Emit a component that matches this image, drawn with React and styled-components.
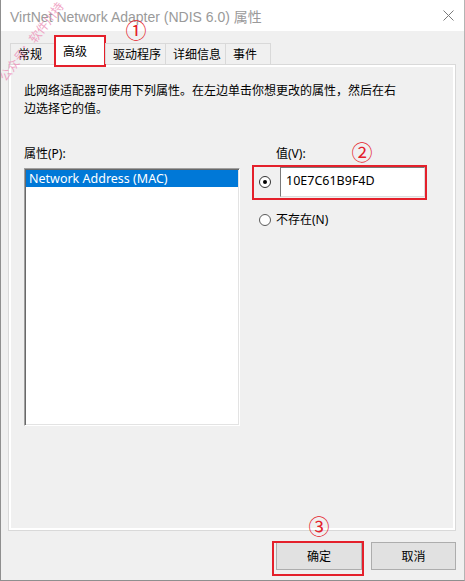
import React from "react";
import styled, { createGlobalStyle } from "styled-components";

const font = `"Noto Sans", "Noto Sans CJK SC", sans-serif`;

const Global = createGlobalStyle`
  body {
    margin: 0;
    background: #ffffff;
  }
  * {
    box-sizing: border-box;
  }
`;

const Window = styled.div`
  position: relative;
  width: 465px;
  height: 581px;
  display: flex;
  flex-direction: column;
  background: #f0f0f0;
  border-left: 1px solid #8f8f8f;
  border-right: 1px solid #b4b4b4;
  border-bottom: 1px solid #8f8f8f;
  font-family: ${font};
  font-size: 12px;
  color: #000;
  overflow: hidden;
`;

const TitleBar = styled.div`
  height: 31px;
  flex-shrink: 0;
  display: flex;
  align-items: center;
  justify-content: space-between;
  padding: 0 10px 0 9px;
  background: #ffffff;
  color: #9a9a9a;
  font-family: "Liberation Sans", "Noto Sans CJK SC", sans-serif;
  font-size: 14px;
`;

const Content = styled.div`
  flex: 1;
  display: flex;
  flex-direction: column;
  padding: 0 8px 10px 7px;
`;

const TabStrip = styled.div`
  position: relative;
  z-index: 1;
  height: 33px;
  display: flex;
  align-items: flex-end;
  padding-left: 2px;
`;

const Tab = styled.div`
  position: relative;
  width: ${(p) => p.$w}px;
  height: ${(p) => (p.$active ? 30 : 21)}px;
  margin-bottom: ${(p) => (p.$active ? -2 : 0)}px;
  display: flex;
  align-items: center;
  padding-left: ${(p) => (p.$active ? 8 : 7)}px;
  padding-bottom: ${(p) => (p.$active ? 2 : 0)}px;
  background: ${(p) => (p.$active ? "#ffffff" : "#f0f0f0")};
  border: 1px solid #d9d9d9;
  border-bottom: none;
  & + & {
    margin-left: -1px;
  }
`;

const Panel = styled.div`
  height: 467px;
  flex-shrink: 0;
  display: flex;
  flex-direction: column;
  padding: 17px 14px 0 15px;
  border: 1px solid #d9d9d9;
  box-shadow: inset 0 0 0 2px #ffffff;
`;

const Description = styled.p`
  margin: 0;
  width: 380px;
  line-height: 18px;
`;

const Columns = styled.div`
  margin-top: 27px;
  display: grid;
  grid-template-columns: 216px 175px;
  column-gap: 12px;
`;

const Column = styled.div`
  position: relative;
  display: flex;
  flex-direction: column;
`;

const Label = styled.div`
  height: 18px;
  line-height: 18px;
  padding-left: ${(p) => p.$indent || 0}px;
`;

const ListBox = styled.div`
  margin-top: 5px;
  height: 258px;
  padding: 1px;
  background: #ffffff;
  border-top: 1px solid #a0a0a0;
  border-left: 1px solid #a0a0a0;
  border-right: 1px solid #ffffff;
  border-bottom: 1px solid #ffffff;
  box-shadow: inset 1px 1px 0 #696969, inset -1px -1px 0 #e3e3e3;
`;

const ListItem = styled.div`
  height: 17px;
  line-height: 17px;
  padding-left: 3px;
  background: ${(p) => (p.$selected ? "#0078d7" : "transparent")};
  color: ${(p) => (p.$selected ? "#ffffff" : "#000000")};
  font-size: 12.5px;
`;

const ValueRow = styled.div`
  position: relative;
  margin-top: 4px;
  height: 30px;
  display: flex;
  align-items: center;
`;

const OptionRow = styled.div`
  margin-top: 15px;
  height: 16px;
  display: flex;
  align-items: center;
`;

const Radio = styled.span`
  position: relative;
  width: 12px;
  height: 12px;
  margin-left: 7px;
  flex-shrink: 0;
  border-radius: 50%;
  border: 1px solid ${(p) => (p.$checked ? "#333333" : "#5a5a5a")};
  background: #ffffff;
  &::after {
    content: "";
    display: ${(p) => (p.$checked ? "block" : "none")};
    position: absolute;
    left: 3px;
    top: 3px;
    width: 4px;
    height: 4px;
    border-radius: 50%;
    background: #000000;
  }
`;

const OptionText = styled.span`
  margin-left: 5px;
  line-height: 16px;
`;

const TextInput = styled.div`
  margin-left: 9px;
  width: 145px;
  height: 30px;
  padding: 2px 5px 0;
  line-height: 22px;
  font-size: 12.5px;
  background: #ffffff;
  border-top: 1px solid #7a7a7a;
  border-left: 1px solid #7a7a7a;
  border-right: 1px solid #dcdcdc;
  border-bottom: 1px solid #dcdcdc;
`;

const Buttons = styled.div`
  margin-top: 11px;
  display: flex;
  justify-content: flex-end;
  gap: 9px;
`;

const Button = styled.div`
  position: relative;
  width: ${(p) => p.$w}px;
  height: 28px;
  display: flex;
  align-items: center;
  justify-content: center;
  background: #e1e1e1;
  border: 1px solid #adadad;
`;

const Highlight = styled.span`
  position: absolute;
  top: ${(p) => p.$t}px;
  left: ${(p) => p.$l}px;
  right: ${(p) => p.$r}px;
  bottom: ${(p) => p.$b}px;
  border: 2px solid #e4202b;
  pointer-events: none;
`;

const Marker = styled.span`
  position: absolute;
  left: ${(p) => p.$x}px;
  top: ${(p) => p.$y}px;
  transform: translate(-50%, -50%);
  color: #e4202b;
  font-family: "Noto Sans CJK SC", sans-serif;
  font-size: 21px;
  line-height: 1;
  pointer-events: none;
`;

const Watermark = styled.span`
  position: absolute;
  z-index: 2;
  left: -18px;
  top: 34px;
  transform: rotate(-52deg);
  color: #ee8fb8;
  font-family: "Noto Sans CJK SC", sans-serif;
  font-size: 12px;
  line-height: 14px;
  white-space: nowrap;
  opacity: 0.8;
  pointer-events: none;
`;

const CloseIcon = () => (
  <svg width="11" height="11" viewBox="0 0 11 11">
    <path d="M0.5 0.5 L10.5 10.5 M10.5 0.5 L0.5 10.5" stroke="#7a7a7a" strokeWidth="1" fill="none" />
  </svg>
);

const tabs = [
  { label: "常规", w: 45 },
  { label: "高级", w: 52, active: true },
  { label: "驱动程序", w: 61 },
  { label: "详细信息", w: 61 },
  { label: "事件", w: 46 },
];

export default function App() {
  return (
    <Window>
      <Global />
      <TitleBar>
        <span>VirtNet Network Adapter (NDIS 6.0) 属性</span>
        <CloseIcon />
      </TitleBar>
      <Content>
        <TabStrip>
          {tabs.map((t) => (
            <Tab key={t.label} $w={t.w} $active={t.active}>
              {t.label}
              {t.active && (
                <>
                  <Highlight $t={-2} $l={-1} $r={-1} $b={-1} />
                  <Marker $x={81} $y={-8}>①</Marker>
                </>
              )}
            </Tab>
          ))}
        </TabStrip>
        <Panel>
          <Description>
            此网络适配器可使用下列属性。在左边单击你想更改的属性，然后在右边选择它的值。
          </Description>
          <Columns>
            <Column>
              <Label>属性(P):</Label>
              <ListBox>
                <ListItem $selected>Network Address (MAC)</ListItem>
              </ListBox>
            </Column>
            <Column>
              <Label $indent={24}>值(V):</Label>
              <Marker $x={110} $y={6}>②</Marker>
              <ValueRow>
                <Radio $checked />
                <TextInput>10E7C61B9F4D</TextInput>
                <Highlight $t={-2} $l={0} $r={0} $b={-3} />
              </ValueRow>
              <OptionRow>
                <Radio />
                <OptionText>不存在(N)</OptionText>
              </OptionRow>
            </Column>
          </Columns>
        </Panel>
        <Buttons>
          <Button $w={86}>
            确定
            <Highlight $t={-2} $l={-5} $r={-3} $b={-7} />
            <Marker $x={42} $y={-18}>③</Marker>
          </Button>
          <Button $w={85}>取消</Button>
        </Buttons>
      </Content>
      <Watermark>公众号：软件川持</Watermark>
    </Window>
  );
}
